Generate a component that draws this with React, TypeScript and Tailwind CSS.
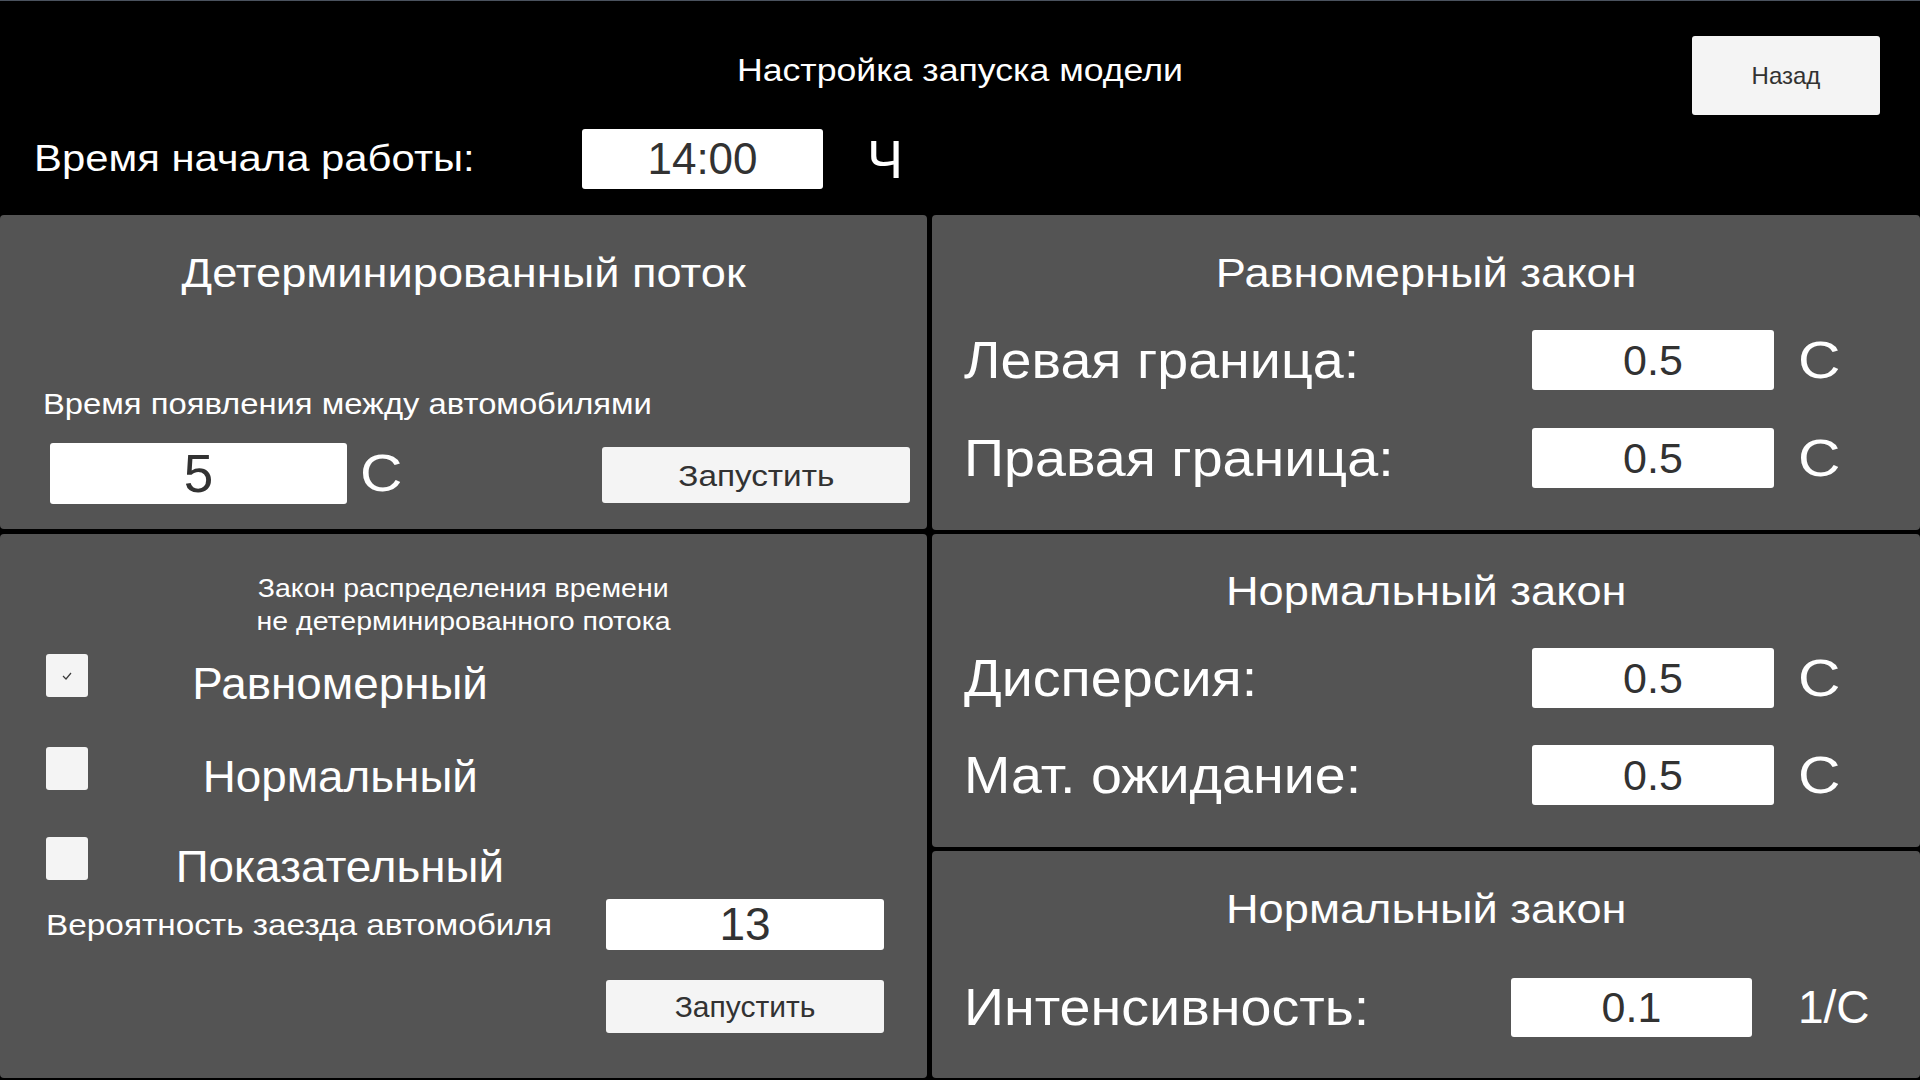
import React from 'react';

const font = "font-['Liberation_Sans',Arial,sans-serif]";

// подписи в оригинале растянуты по горизонтали
function Wide({ children, className = 'origin-center scale-x-[1.13]' }: { children: React.ReactNode; className?: string }) {
  return <span className={`inline-block whitespace-nowrap ${className}`}>{children}</span>;
}

function Field({ value, className }: { value: string; className: string }) {
  return (
    <div className={`flex items-center justify-center rounded-[3px] bg-white text-[#323232] ${className}`}>
      {value}
    </div>
  );
}

function Panel({ children, className = '' }: { children: React.ReactNode; className?: string }) {
  return <div className={`rounded-[4px] bg-[#545454] ${className}`}>{children}</div>;
}

function ParamRow({ label, value, unit, mt }: { label: string; value: string; unit: string; mt: string }) {
  return (
    <div className={`flex items-center pl-[32px] ${mt}`}>
      <div className="w-[568px] text-[52px] leading-[60px] text-white">
        <Wide className="origin-left scale-x-[1.07]">{label}</Wide>
      </div>
      <Field value={value} className="h-[60px] w-[242px] text-[43px]" />
      <div className="ml-[24px] text-[52px] leading-[60px] text-white">
        <Wide className="origin-left scale-x-[1.13]">{unit}</Wide>
      </div>
    </div>
  );
}

function CheckRow({ label, checked, h }: { label: string; checked?: boolean; h: string }) {
  return (
    <div className={`flex items-start ${h}`}>
      <div className="ml-[46px] flex h-[43px] w-[42px] items-center justify-center rounded-[3px] bg-[#f4f4f4]">
        {checked && (
          <svg width="12" height="10" viewBox="0 0 12 10" fill="none">
            <path d="M2 5 L5 8 L10 2" stroke="#3a3a3a" strokeWidth="1.2" />
          </svg>
        )}
      </div>
      <div className="ml-[12px] mt-[5px] w-[480px] text-center text-[44px] leading-[50px] text-white">
        <Wide className="origin-center scale-x-[1.04]">{label}</Wide>
      </div>
    </div>
  );
}

export default function App() {
  return (
    <div className={`h-[1080px] w-[1920px] overflow-hidden bg-black ${font}`}>
      {/* Шапка */}
      <div className="h-[215px] border-t border-[#4a525e]">
        <div className="grid h-[114px] grid-cols-[1fr_auto_1fr] pt-[35px]">
          <div />
          <div className="mt-[17px] text-[31px] leading-[36px] text-white">
            <Wide className="origin-center scale-x-[1.15]">Настройка запуска модели</Wide>
          </div>
          <button className="mr-[40px] h-[79px] w-[188px] justify-self-end rounded-[3px] bg-[#f4f4f4] text-[24px] text-[#323232]">
            Назад
          </button>
        </div>
        <div className="mt-[14px] flex items-center pl-[34px]">
          <div className="w-[548px] text-[37px] leading-[44px] text-white">
            <Wide className="origin-left scale-x-[1.13]">Время начала работы:</Wide>
          </div>
          <Field value="14:00" className="h-[60px] w-[241px] text-[44px]" />
          <div className="ml-[44px] text-[54px] leading-[60px] text-white">Ч</div>
        </div>
      </div>

      <div className="flex h-[863px] gap-[5px]">
        {/* Левая колонка */}
        <div className="flex w-[927px] flex-col gap-[5px]">
          <Panel className="h-[314px] pt-[35px]">
            <div className="text-center text-[40px] leading-[46px] text-white">
              <Wide>Детерминированный поток</Wide>
            </div>
            <div className="mt-[91px] pl-[43px] text-[29px] leading-[34px] text-white">
              <Wide className="origin-left scale-x-[1.13]">Время появления между автомобилями</Wide>
            </div>
            <div className="mt-[22px] flex items-start">
              <Field value="5" className="ml-[50px] h-[61px] w-[297px] text-[53px]" />
              <div className="ml-[13px] text-[52px] leading-[61px] text-white">
                <Wide className="origin-left scale-x-[1.13]">С</Wide>
              </div>
              <button className="ml-auto mr-[17px] mt-[4px] h-[56px] w-[308px] rounded-[3px] bg-[#f4f4f4] text-[30px] text-[#323232]">
                <Wide className="origin-center scale-x-[1.11]">Запустить</Wide>
              </button>
            </div>
          </Panel>

          <Panel className="flex-1 pt-[38px]">
            <div className="text-center text-[25px] leading-[33px] text-white">
              <Wide className="origin-center scale-x-[1.14]">Закон распределения времени</Wide>
              <br />
              <Wide className="origin-center scale-x-[1.14]">не детерминированного потока</Wide>
            </div>
            <div className="mt-[16px]">
              <CheckRow label="Равномерный" checked h="h-[93px]" />
              <CheckRow label="Нормальный" h="h-[90px]" />
              <CheckRow label="Показательный" h="h-[62px]" />
            </div>
            <div className="flex items-center">
              <div className="w-[606px] pl-[46px] text-[29px] leading-[34px] text-white">
                <Wide className="origin-left scale-x-[1.15]">Вероятность заезда автомобиля</Wide>
              </div>
              <Field value="13" className="h-[51px] w-[278px] text-[46px]" />
            </div>
            <button className="ml-[606px] mt-[30px] h-[53px] w-[278px] rounded-[3px] bg-[#f4f4f4] text-[30px] text-[#323232]">
              Запустить
            </button>
          </Panel>
        </div>

        {/* Правая колонка */}
        <div className="flex flex-1 flex-col gap-[4px]">
          <Panel className="h-[315px] pt-[35px]">
            <div className="text-center text-[40px] leading-[46px] text-white">
              <Wide>Равномерный закон</Wide>
            </div>
            <ParamRow label="Левая граница:" value="0.5" unit="С" mt="mt-[34px]" />
            <ParamRow label="Правая граница:" value="0.5" unit="С" mt="mt-[38px]" />
          </Panel>

          <Panel className="h-[313px] pt-[34px]">
            <div className="text-center text-[40px] leading-[46px] text-white">
              <Wide>Нормальный закон</Wide>
            </div>
            <ParamRow label="Дисперсия:" value="0.5" unit="С" mt="mt-[34px]" />
            <ParamRow label="Мат. ожидание:" value="0.5" unit="С" mt="mt-[37px]" />
          </Panel>

          <Panel className="flex-1 pt-[35px]">
            <div className="text-center text-[40px] leading-[46px] text-white">
              <Wide>Нормальный закон</Wide>
            </div>
            <div className="mt-[45px] flex items-center pl-[32px]">
              <div className="w-[547px] text-[52px] leading-[60px] text-white">
                <Wide className="origin-left scale-x-[1.07]">Интенсивность:</Wide>
              </div>
              <Field value="0.1" className="h-[59px] w-[241px] text-[43px]" />
              <div className="ml-[46px] text-[46px] leading-[60px] text-white">1/С</div>
            </div>
          </Panel>
        </div>
      </div>
    </div>
  );
}
